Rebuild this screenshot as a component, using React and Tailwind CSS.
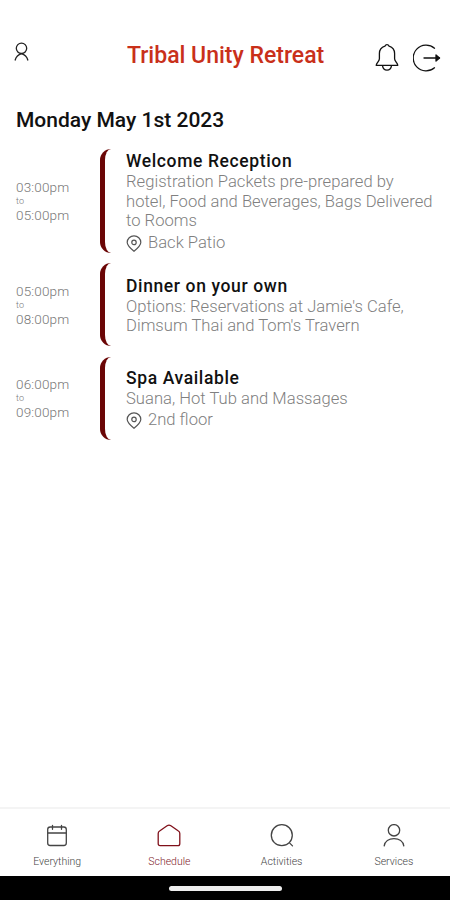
const events = [
  {
    start: '03:00pm',
    end: '05:00pm',
    title: 'Welcome Reception',
    lines: ['Registration Packets pre-prepared by', 'hotel, Food and Beverages, Bags Delivered', 'to Rooms'],
    location: 'Back Patio',
  },
  {
    start: '05:00pm',
    end: '08:00pm',
    title: 'Dinner on your own',
    lines: ["Options: Reservations at Jamie's Cafe,", "Dimsum Thai and Tom's Travern"],
  },
  {
    start: '06:00pm',
    end: '09:00pm',
    title: 'Spa Available',
    lines: ['Suana, Hot Tub and Massages'],
    location: '2nd floor',
  },
];

const tabs = [
  { name: 'Everything', icon: CalendarIcon },
  { name: 'Schedule', icon: HomeIcon, active: true },
  { name: 'Activities', icon: SearchIcon },
  { name: 'Services', icon: PersonIcon },
];

function ProfileIcon() {
  return (
    <svg className="w-4 h-5" viewBox="0 0 16 20" fill="none" stroke="#222" strokeWidth="1.3" strokeLinecap="round">
      <circle cx="7.5" cy="6.3" r="5.2" />
      <path d="M1.2 18c.7-2.600 2.700-5.200 6.300-6.300 3.600 1.100 5.600 3.700 6.300 6.300" />
    </svg>
  );
}

function BellIcon() {
  return (
    <svg className="w-6 h-7" viewBox="0 0 24 28" fill="none" stroke="#111" strokeWidth="1.3" strokeLinejoin="round" strokeLinecap="round">
      <path d="M12 .7c-1.200 0-1.700.6-2.100 1.500C6.600 3.300 4.400 6 4.400 9.500v5.200c0 2.500-2.700 4-3.200 6.600h21.600c-.5-2.600-3.200-4.100-3.200-6.600V9.500c0-3.500-2.200-6.200-5.500-7.300-.4-.9-.9-1.500-2.100-1.500z" />
      <path d="M7.500 21.600c.4 3 2.200 4.600 4.500 4.600s4.100-1.600 4.500-4.600" />
    </svg>
  );
}

function LogoutIcon() {
  return (
    <svg className="w-7 h-7" viewBox="0 0 28 28" fill="none" stroke="#111" strokeWidth="1.3" strokeLinecap="round" strokeLinejoin="round">
      <path d="M21.500 4.200A12.900 12.900 0 1 0 21.500 23.800" />
      <path d="M11 14H26.500" />
      <path d="M23 11l3.500 3-3.500 3z" fill="#111" />
    </svg>
  );
}

function PinIcon() {
  return (
    <svg className="w-4 h-[17px]" viewBox="0 0 16 17" fill="none" stroke="#555" strokeWidth="1.2">
      <path d="M8 16.200C4.500 13.300 1.200 10.500 1.200 7.400a6.800 6.600 0 0 1 13.600 0c0 3.100-3.300 5.900-6.800 8.800z" />
      <circle cx="8" cy="7.4" r="2.2" />
    </svg>
  );
}

function CalendarIcon() {
  return (
    <svg className="w-6 h-6" viewBox="0 0 24 24" fill="none" stroke="currentColor" strokeWidth="1.3" strokeLinecap="round">
      <rect x="2.7" y="3" width="18.600" height="18.5" rx="2.5" />
      <path d="M3 9h18M7.500 1.300v4M16.500 1.300v4" />
    </svg>
  );
}

function HomeIcon() {
  return (
    <svg className="w-6 h-6" viewBox="0 0 24 24" fill="none" stroke="#80101a" strokeWidth="1.3" strokeLinejoin="round">
      <path d="M1.200 9.500c0-1.200.4-1.900 1.400-2.500l7.500-5.200c1.300-.9 2.500-.9 3.800 0L21.400 7c1 .6 1.400 1.300 1.400 2.500v10.200c0 1.300-.6 1.900-1.900 1.900H3.100c-1.300 0-1.900-.6-1.900-1.900z" />
    </svg>
  );
}

function SearchIcon() {
  return (
    <svg className="w-6 h-6" viewBox="0 0 24 24" fill="none" stroke="currentColor" strokeWidth="1.3" strokeLinecap="round">
      <circle cx="11.8" cy="11.2" r="10.5" />
      <path d="M19.500 18.900l3 3" />
    </svg>
  );
}

function PersonIcon() {
  return (
    <svg className="w-6 h-6" viewBox="0 0 24 24" fill="none" stroke="currentColor" strokeWidth="1.3" strokeLinecap="round">
      <circle cx="12" cy="6.3" r="5.7" />
      <path d="M2.200 21.900c.7-4.400 4.600-7.300 9.800-7.300s9.100 2.900 9.800 7.300" />
    </svg>
  );
}

function EventRow({ event }) {
  return (
    <li className="flex items-stretch min-h-[83px]">
      <div className="w-[84px] flex flex-col justify-center text-[13.5px] leading-[14px] tracking-[0.15px] font-light text-[#777]">
        <span>{event.start}</span>
        <span className="text-[9px]">to</span>
        <span>{event.end}</span>
      </div>
      <div className="w-[11px] border-l-[5px] border-[#6b0606] rounded-l-[11px]" />
      <div className="flex-1 pl-[15px] pt-px flex flex-col justify-center">
        <h3 className="text-[17.5px] leading-[22px] tracking-[0.62px] font-medium text-[#111] whitespace-nowrap">{event.title}</h3>
        {event.lines.map((line) => (
          <p key={line} className="text-[16.6px] leading-[19.5px] tracking-[0.02px] font-light text-[#808080] whitespace-nowrap">{line}</p>
        ))}
        {event.location && (
          <div className="flex items-center gap-1.5 h-[22px] pt-[3px] text-[16.6px] font-light text-[#808080]">
            <PinIcon />
            <span>{event.location}</span>
          </div>
        )}
      </div>
    </li>
  );
}

export default function App() {
  return (
    <div className="h-screen flex flex-col bg-white overflow-hidden font-['Roboto',sans-serif]">
      <header className="flex items-start h-[106px] pt-[42px] pl-3.5 pr-[9px]">
        <ProfileIcon />
        <h1 className="ml-[97px] pt-px text-[23px] leading-[26px] font-medium text-[#c9301a] whitespace-nowrap">
          Tribal Unity Retreat
        </h1>
        <div className="ml-auto flex gap-3.5 pt-0.5">
          <BellIcon />
          <LogoutIcon />
        </div>
      </header>

      <main className="flex-1 pl-4">
        <h2 className="text-[21px] leading-7 font-medium text-[#111]">Monday May 1st 2023</h2>
        <ul className="mt-[15px] flex flex-col gap-[10.5px]">
          {events.map((event) => (
            <EventRow key={event.title} event={event} />
          ))}
        </ul>
      </main>

      <nav className="h-[69px] pl-px border-t-2 border-[#f4f4f4] grid grid-cols-4">
        {tabs.map((tab) => (
          <div
            key={tab.name}
            className={`flex flex-col items-center pt-[15px] ${tab.active ? 'text-[#80202a]' : 'text-[#444]'}`}
          >
            <tab.icon />
            <span className="mt-[7px] text-[10.5px] leading-[14px] font-light">{tab.name}</span>
          </div>
        ))}
      </nav>

      <div className="h-6 bg-black flex items-center justify-center">
        <div className="w-[113px] h-[5px] rounded-full bg-[#eee]" />
      </div>
    </div>
  );
}
